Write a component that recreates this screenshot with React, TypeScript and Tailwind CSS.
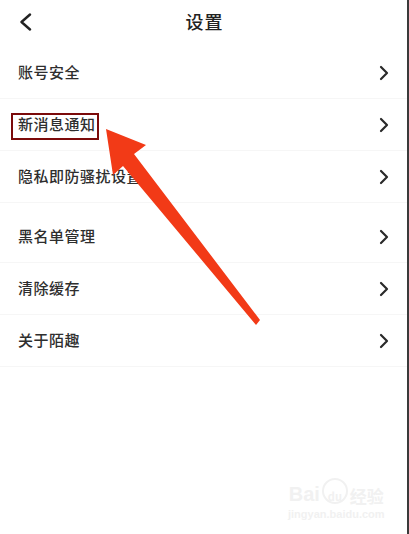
import React from "react";

const groups: string[][] = [
  ["账号安全", "新消息通知", "隐私即防骚扰设置"],
  ["黑名单管理", "清除缓存", "关于陌趣"],
];

const Chevron = () => (
  <svg width="10" height="16" viewBox="0 0 10 16" fill="none">
    <path d="M2 2l6 6-6 6" stroke="#2a2a2a" strokeWidth="2.2" strokeLinecap="round" strokeLinejoin="round" />
  </svg>
);

const Row = ({ label }: { label: string }) => (
  <div className="flex h-[52px] items-center justify-between border-b border-[#f6f6f6] pl-[18px] pr-[20px]">
    <span className="text-[15px] font-medium text-[#2e2e2e] tracking-[0.5px]">{label}</span>
    <Chevron />
  </div>
);

export default function App() {
  return (
    <div
      className="relative h-[534px] w-[409px] overflow-hidden bg-white"
      style={{ fontFamily: '"Noto Sans CJK SC", "Noto Sans", sans-serif' }}
    >
      <div className="relative flex h-[42px] items-center justify-center">
        <button className="absolute left-[18px] top-[13px]">
          <svg width="14" height="18" viewBox="0 0 14 18" fill="none">
            <path d="M12 1.5L3.5 9l8.5 7.5" stroke="#222" strokeWidth="2.4" strokeLinecap="round" strokeLinejoin="round" />
          </svg>
        </button>
        <h1 className="text-[18px] font-medium text-[#222] tracking-[1px]">设置</h1>
      </div>

      <div className="mt-[5px]">
        {groups.map((g, i) => (
          <div key={i} className={i > 0 ? "mt-2" : ""}>
            {g.map((label) => (
              <Row key={label} label={label} />
            ))}
          </div>
        ))}
      </div>

      {/* highlight box */}
      <div className="absolute left-[11px] top-[113px] h-[27px] w-[88px] border-[2.5px] border-[#7b0a0a]" />

      {/* arrow */}
      <svg className="absolute left-0 top-0" width="409" height="534" viewBox="0 0 409 534">
        <polygon
          points="106,129 146,145 134,154 260,320 256,325 123,166 113,175"
          fill="#f23a17"
        />
      </svg>

      {/* watermark */}
      <div className="absolute left-[288px] top-[478px] flex flex-col items-center text-[#f1f1f1]">
        <div className="flex items-end gap-[2px] leading-none">
          <span className="text-[20px] font-bold" style={{ fontFamily: '"Liberation Sans", sans-serif' }}>
            Bai
          </span>
          <span className="flex h-[26px] w-[26px] items-end justify-center rounded-full border-2 border-[#f1f1f1] text-[11px] font-bold">
            du
          </span>
          <span className="text-[17px] font-bold">经验</span>
        </div>
        <span className="mt-[2px] text-[11px] font-bold" style={{ fontFamily: '"Liberation Sans", sans-serif' }}>
          jingyan.baidu.com
        </span>
      </div>

      <div className="absolute right-0 top-0 h-full w-[2px] bg-[#3a3a3a]" />
    </div>
  );
}
